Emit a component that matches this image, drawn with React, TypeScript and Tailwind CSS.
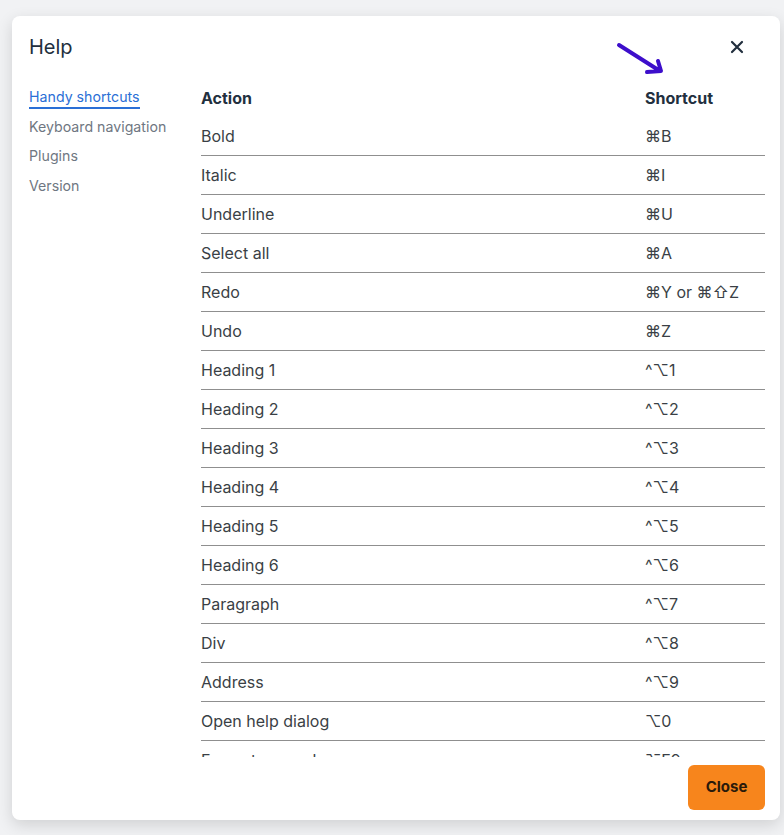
import React from 'react';

const shortcuts: [string, string][] = [
  ['Bold', '⌘B'],
  ['Italic', '⌘I'],
  ['Underline', '⌘U'],
  ['Select all', '⌘A'],
  ['Redo', '⌘Y or ⌘⇧Z'],
  ['Undo', '⌘Z'],
  ['Heading 1', '^⌥1'],
  ['Heading 2', '^⌥2'],
  ['Heading 3', '^⌥3'],
  ['Heading 4', '^⌥4'],
  ['Heading 5', '^⌥5'],
  ['Heading 6', '^⌥6'],
  ['Paragraph', '^⌥7'],
  ['Div', '^⌥8'],
  ['Address', '^⌥9'],
  ['Open help dialog', '⌥0'],
  ['Focus to menubar', '⌥F9'],
  ['Focus to toolbar', '⌥F10'],
];

const navItems = ['Handy shortcuts', 'Keyboard navigation', 'Plugins', 'Version'];

// hand-drawn annotation arrow pointing at the Shortcut column
const Arrow = () => (
  <svg className="absolute left-[604px] top-[26px]" width="62" height="52" viewBox="0 0 62 52" fill="none">
    <path
      d="M3 3 L44 29 M31 30 L45 29 L42 19"
      stroke="#3d0ecb"
      strokeWidth={4}
      strokeLinecap="round"
      strokeLinejoin="round"
    />
  </svg>
);

const CloseIcon = () => (
  <svg width="14" height="14" viewBox="0 0 14 14" fill="none">
    <path d="M2 2 L12 12 M12 2 L2 12" stroke="#222f3e" strokeWidth={2.2} strokeLinecap="round" />
  </svg>
);

export default function App() {
  return (
    <div className="h-[835px] w-[784px] bg-[#f1f2f4] pt-4 pl-3 font-['Inter','Noto_Sans','DejaVu_Sans',sans-serif]">
      <div className="relative flex h-[804px] w-[768px] flex-col rounded-lg bg-white shadow-[0_5px_16px_rgba(0,0,0,0.14)]">
        <Arrow />
        <div className="flex h-[62px] items-center justify-between px-[17px]">
          <h1 className="text-[20px] text-[#222f3e]">Help</h1>
          <button className="mr-[14px] flex h-6 w-6 items-center justify-center">
            <CloseIcon />
          </button>
        </div>
        <div className="flex h-[679px] pl-[17px] pr-[15px]">
          <nav className="flex w-[172px] flex-col pt-[6px]">
            {navItems.map((item, i) => (
              <div key={item} className="h-[29.5px]">
                <span
                  className={
                    i === 0
                      ? 'inline-block border-b-2 border-[#2a6fd6] text-[14.2px] leading-[20px] text-[#2a6fd6]'
                      : 'inline-block text-[14.2px] leading-[20px] text-[#6f7782]'
                  }
                >
                  {item}
                </span>
              </div>
            ))}
          </nav>
          <div className="flex-1 overflow-hidden">
            <div className="flex h-[39px] items-center text-[16px] font-bold text-[#222f3e]">
              <div className="w-[444px]">Action</div>
              <div>Shortcut</div>
            </div>
            {shortcuts.map(([action, keys]) => (
              <div
                key={action}
                className="flex h-[39px] items-center border-b-[1.5px] border-[#8f8f8f] text-[16px] text-[#3a3f45]"
              >
                <div className="w-[444px]">{action}</div>
                <div>{keys}</div>
              </div>
            ))}
          </div>
        </div>
        <div className="flex flex-1 items-start justify-end pt-[8px] pr-[15px]">
          <button className="h-[45px] w-[77px] rounded-md bg-[#f7851c] text-[15px] font-bold text-[#2a1a0a]">
            Close
          </button>
        </div>
      </div>
    </div>
  );
}
